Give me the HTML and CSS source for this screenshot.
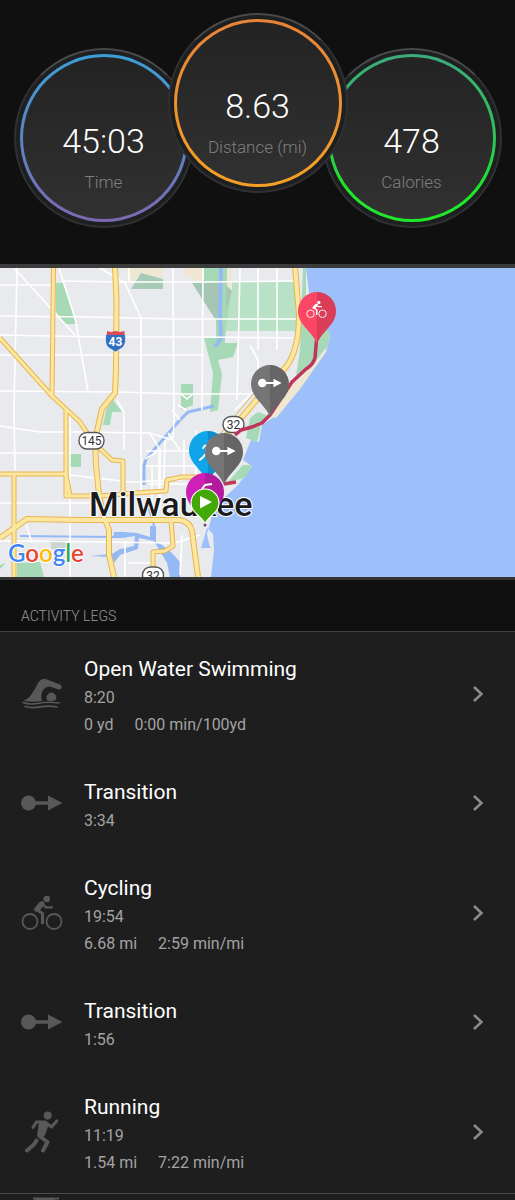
FILE: index.html
```html
<!DOCTYPE html>
<html lang="en">
<head>
<meta charset="utf-8">
<meta name="viewport" content="width=device-width, initial-scale=1">
<title>Activity</title>
<link rel="stylesheet" href="styles.css">
</head>
<body>
<svg class="defs" aria-hidden="true">
  <defs>
    <symbol id="swim" viewBox="0 0 42 42">
      <path fill="currentColor" d="M2 28C8 26 11 21 15 14C18 7 21 5 26 6.500L39 11.500C42 13 41 17 37.500 16.500L29 13.500C22 14 19 20 21 28Q11 29.500 2 28Z"/>
      <path fill="currentColor" d="M26.500 27.500A4.800 4.800 0 1 1 34.500 27Q30 28.500 26.500 27.500Z"/>
      <path fill="none" stroke="currentColor" stroke-width="1.600" stroke-linecap="round" d="M2 29.500Q9 32 18 30.200T38 30M4 33.500Q10 35.500 19 33.900T36 34"/>
    </symbol>
    <symbol id="move" viewBox="0 0 42 42">
      <circle cx="7.500" cy="21" r="7.500" fill="currentColor"/>
      <path fill="currentColor" d="M12 19.300H27V13.500L41.500 21L27 28.500V22.700H12Z"/>
    </symbol>
    <symbol id="bike" viewBox="0 0 42 42">
      <g fill="none" stroke="currentColor">
        <circle cx="9" cy="29.500" r="7.500" stroke-width="1.800"/>
        <circle cx="33" cy="29.500" r="7.500" stroke-width="1.800"/>
        <path stroke-width="2.200" stroke-linecap="round" stroke-linejoin="round" d="M21.500 10.500L24.500 15.300H31"/>
        <path stroke-width="3" stroke-linejoin="round" d="M15.500 17.500L21.500 21.500V32"/>
      </g>
      <path fill="currentColor" d="M12.500 17.500L18 10.500Q20.500 8 23 10.500L23.500 13L19 18L15 20Z"/>
      <circle cx="25.700" cy="7" r="3.300" fill="currentColor"/>
    </symbol>
    <symbol id="run" viewBox="0 0 42 42">
      <circle cx="26.700" cy="4.500" r="4" fill="currentColor"/>
      <g fill="none" stroke="currentColor" stroke-linecap="round" stroke-linejoin="round">
        <path stroke-width="3.200" d="M12 16.500L15.500 11H24L30.500 16L35.800 10"/>
        <path stroke-width="4" d="M19 25.500L26.500 31L22 39.500M15.500 29.500L13 33.500L6 39.500"/>
      </g>
      <path fill="currentColor" d="M18 10H25L28 13L24.500 23L22 27L16 25.500Z"/>
    </symbol>
    <symbol id="chevron" viewBox="0 0 12 18">
      <path fill="none" stroke="currentColor" stroke-width="2.500" d="M2 2L9.500 9L2 16"/>
    </symbol>
    <symbol id="pin" viewBox="-20 -20 40 54">
      <path fill="currentColor" d="M0 33C-4 21-19 14-19 0A19 19 0 0 1 19 0C19 14 4 21 0 33Z"/>
      <path fill="#000" opacity=".13" d="M0 33V-19A19 19 0 0 1 19 0C19 14 4 21 0 33Z"/>
    </symbol>
  </defs>
</svg>

<main>
  <section class="stats" aria-label="Summary">
    <div class="dial time"><div class="ring"><div class="face"><span class="value">45:03</span><span class="label">Time</span></div></div></div>
    <div class="dial distance"><div class="ring"><div class="face"><span class="value">8.63</span><span class="label">Distance (mi)</span></div></div></div>
    <div class="dial calories"><div class="ring"><div class="face"><span class="value">478</span><span class="label">Calories</span></div></div></div>
  </section>

  <section class="map" aria-label="Route map">
    <svg viewBox="0 268 515 309" role="img" aria-label="Map of Milwaukee with the route">
      <rect y="268" width="515" height="309" fill="#e8eaed"/>
      <path fill="#f0e7d2" d="M126 268H163V278L140 273L131 285Z M184 268H205V282L184 276Z M227 268H232L231 290L226 286Z"/>
      <g fill="#a6d9b6">
        <path d="M56 283H63L76 324H65L56 312Z"/>
        <path fill="#a8cbb7" d="M131 289L141 273L163 279V289Z"/>
        <path d="M204 268H227V286L232 291L225 338L225 343H238L233 357L218 360L222 374L218 410L210 412L213 373L204 338H216V320L204 296Z"/>
        <path fill="#a5c6b4" d="M192 283H220L217 322Z M226 286L232 291L226 310Z"/>
        <path fill="#b8e1c6" d="M232 281H295L299 331H225L232 292Z"/>
        <path d="M181 384H193V405L181 410Z M69 454H81V467H69Z M113 400L122 412H112L110 425H103L106 410Z M17 563L40 562L44 577H17Z M0 565L6 563L0 569Z"/>
      </g>
      <path fill="#cbd5d0" d="M51 540H68V549H51Z"/>
      <path fill="#9dc0fa" d="M306 268H515V577H211L214 550L213 534L207 528L201 548H211L205 540L212 516L224 498L238 485L252 466L243 460L251 440L259 442L262 425L280 413L300 388L323 355L330 336L312 318Z"/>
      <path fill="#a6d9b6" d="M303 268H306V320L330 332L328 345L312 366L296 376L300 350Z M250 418L261 416L260 430L257 442L246 438Z M243 465L252 465L245 478L228 482Z M250 418L258 412L268 416L262 422Z"/>
      <path fill="#f0e7d2" d="M327 347L330 338L326 352L300 389L276 418L271 417L293 382L312 368Z"/>
      <path fill="#9dc0fa" d="M206 530L210 548H202L206 535Z"/>
      <g fill="none" stroke="#95b9f4" stroke-width="4">
        <path d="M221 268L220 317L221 338L215 347"/>
        <path d="M214 406L188 412L179 421L146 459L144 466V485" stroke-width="3"/>
        <path d="M146 500L154 526V536M115 537L20 536" stroke-width="2"/>
      </g>
      <path fill="#95b9f4" d="M114 532L124 532L137 533L150 537L150 526H156V542L162 545L172 553L180 562V577H170L167 563L154 541L139 538L138 549L120 555L114 563L112 557L90 556L112 554L120 549L134 546L135 536L122 538H113Z"/>

      <g fill="none" stroke="#fff" stroke-width="1.600">
        <path d="M0 285H55M62 281L125 282L205 282L295 281M0 316L90 317L175 319H204M0 335L105 337L204 337L293 338M0 355H204M0 391L118 392L184 394H250M0 426L40 432L80 432L150 433L172 440M0 453H70M70 475L130 482L182 480M0 503H90M0 541H24L175 543L200 535M204 319H297"/>
        <path d="M17 268L14 410L15 470M70 410V577M141 319V490M173 268L174 420L173 440M203 268L202 410M240 268L237 400M258 268L258 350M277 268V350M129 268V282"/>
        <path d="M15 269L75 335M59 268L75 318L88 391M100 268L125 283L141 318V400M117 400L124 412V450M26 524L32 543M125 541V577M150 433L160 450V510M165 440L164 480M168 433L173 440L180 450M146 451H205M146 466H205M149 484H205M152 466V520M159 449V500M178 405L186 410M181 394L187 399L193 394M128 563H151M172 410L180 420M196 430V490M184 440V480M250 345L258 360V380M182 535L180 575M235 410L255 390M145 459L155 453L160 448"/>
      </g>

      <g class="roads-edge">
        <path d="M53.500 266L52 396M0 338L52 396L80 422L93 442L112 460L123 461V494M66 410V496L100 496L135 493L166 491L167 480L182 477H210M0 474H66L70 496M14 474V577M171 520L173 546L165 551L153 552V577"/>
        <path d="M115 266L116.500 300L116 370L115 393L102 409L95 440L96 465L99 495L104 517L109 530V555L114 577M0 538L27 519L80 520L180 520Q190 522 192 531L198 577M295 266L299 315Q299 350 286 367L260 396L218 445" class="wide"/>
      </g>
      <g class="roads-fill">
        <path d="M53.500 266L52 396M0 338L52 396L80 422L93 442L112 460L123 461V494M66 410V496L100 496L135 493L166 491L167 480L182 477H210M0 474H66L70 496M14 474V577M171 520L173 546L165 551L153 552V577"/>
        <path d="M115 266L116.500 300L116 370L115 393L102 409L95 440L96 465L99 495L104 517L109 530V555L114 577M0 538L27 519L80 520L180 520Q190 522 192 531L198 577M295 266L299 315Q299 350 286 367L260 396L218 445" class="wide"/>
      </g>
      <path fill="none" stroke="#e8b450" d="M254 393L221 433"/>

      <path fill="#2f6fc4" stroke="#fff" stroke-width=".6" d="M106 334Q104 345 109 348L115.500 352L122 348Q127 344 125 334Z"/>
      <path fill="#d84a55" d="M107 335V331L111 332L115.500 331L120 332L124.500 331V335Z"/>
      <text class="shield-text" x="115.500" y="346" fill="#fff">43</text>

      <g fill="#fff" stroke="#555" stroke-width="1.400">
        <rect x="79" y="432.500" width="25" height="16.500" rx="8"/>
        <rect x="223" y="416.500" width="21" height="16" rx="8"/>
        <rect x="142.500" y="567" width="21" height="16" rx="8"/>
      </g>
      <g class="route-text">
        <text x="91.500" y="445">145</text>
        <text x="233.500" y="429">32</text>
        <text x="153" y="580">32</text>
      </g>

      <text class="city" x="89" y="516">Milwaukee</text>

      <g fill="none" stroke="#bf365b" stroke-width="3.500" stroke-linejoin="round">
        <path d="M316.500 340L315 358Q313 365 306 369L292 382L270 415L262 423L252 427L241 430L235 435"/>
        <path d="M224 484L236 482"/>
      </g>

      <use href="#pin" x="188" y="430" width="40" height="54" color="#10a5e8"/>
      <use href="#run" x="197" y="440" width="21" height="21" color="#fff"/>
      <use href="#pin" x="204" y="432" width="40" height="54" color="#757575"/>
      <use href="#move" x="212" y="439" width="24" height="24" color="#fff"/>
      <use href="#pin" x="250" y="364" width="40" height="54" color="#757575"/>
      <use href="#move" x="258" y="371" width="24" height="24" color="#fff"/>
      <use href="#pin" x="297" y="291" width="40" height="54" color="#fb4765"/>
      <use href="#bike" x="306" y="299" width="21" height="21" color="#fff"/>
      <use href="#pin" x="185" y="472" width="40" height="54" color="#cd20b6"/>
      <path fill="none" stroke="#fff" stroke-width="2" d="M202 489L205 485L212 484"/>
      <path fill="#43a906" stroke="#fff" stroke-width="1.200" d="M205 524C202 516 191 513 191 503A14 14 0 0 1 219 503C219 513 208 516 205 524Z"/>
      <path fill="#fff" d="M200 496L212 502L200 508.500Z"/>
      <circle cx="205" cy="525" r="1.500" fill="#704080"/>

      <text class="google" x="8" y="562"><tspan fill="#4285f4">G</tspan><tspan fill="#ea4335">o</tspan><tspan fill="#fbbc05">o</tspan><tspan fill="#4285f4">g</tspan><tspan fill="#34a853">l</tspan><tspan fill="#ea4335">e</tspan></text>
    </svg>
  </section>

  <section class="legs">
    <h2>ACTIVITY LEGS</h2>
    <ul>
      <li><a href="#swimming">
        <svg class="icon"><use href="#swim"/></svg>
        <div class="info"><h3>Open Water Swimming</h3><p>8:20</p><p class="pair"><span>0 yd</span><span>0:00 min/100yd</span></p></div>
        <svg class="chevron"><use href="#chevron"/></svg>
      </a></li>
      <li><a href="#transition-1">
        <svg class="icon"><use href="#move"/></svg>
        <div class="info"><h3>Transition</h3><p>3:34</p></div>
        <svg class="chevron"><use href="#chevron"/></svg>
      </a></li>
      <li><a href="#cycling">
        <svg class="icon"><use href="#bike"/></svg>
        <div class="info"><h3>Cycling</h3><p>19:54</p><p class="pair"><span>6.68 mi</span><span>2:59 min/mi</span></p></div>
        <svg class="chevron"><use href="#chevron"/></svg>
      </a></li>
      <li><a href="#transition-2">
        <svg class="icon"><use href="#move"/></svg>
        <div class="info"><h3>Transition</h3><p>1:56</p></div>
        <svg class="chevron"><use href="#chevron"/></svg>
      </a></li>
      <li><a href="#running">
        <svg class="icon"><use href="#run"/></svg>
        <div class="info"><h3>Running</h3><p>11:19</p><p class="pair"><span>1.54 mi</span><span>7:22 min/mi</span></p></div>
        <svg class="chevron"><use href="#chevron"/></svg>
      </a></li>
    </ul>
    <div class="next"><svg viewBox="0 0 26 3"><path fill="currentColor" d="M0 0H26V2H22V3H2V2H0Z"/></svg></div>
  </section>
</main>
</body>
</html>
```

FILE: styles.css
```css
* {
  box-sizing: border-box;
}

body {
  margin: 0;
  background: #101010;
  color: #fff;
  font-family: Roboto, "Liberation Sans", sans-serif;
}

h2, h3, p, ul {
  margin: 0;
  padding: 0;
  font-weight: 400;
}

.defs {
  display: block;
  width: 0;
  height: 0;
}

.stats {
  display: flex;
  justify-content: center;
  align-items: flex-start;
  padding: 48px 0 36px;
}

.dial {
  width: 180px;
  height: 180px;
  padding: 4px;
  border: 2px solid #303032;
  border-top-color: #49494b;
  border-radius: 50%;
  background: #1d1f20;
}

.distance {
  z-index: 1;
  margin: -35px -26px 0;
}

.ring {
  height: 100%;
  padding: 3px;
  border-radius: 50%;
}

.time .ring {
  background: linear-gradient(#3a9fd5, #7d68b0);
}

.distance .ring {
  background: linear-gradient(#e8833a, #f5a024);
}

.calories .ring {
  background: linear-gradient(#3dab7c, #2fc258 50%, #1fe828 80%);
}

.face {
  display: flex;
  flex-direction: column;
  align-items: center;
  gap: 9px;
  height: 100%;
  padding-top: 62px;
  border-radius: 50%;
  background: linear-gradient(#232323, #303130);
}

.value {
  font-size: 34px;
  font-weight: 300;
  line-height: 44px;
}

.label {
  font-size: 17px;
  font-weight: 300;
  line-height: 20px;
  color: #808080;
}

.map {
  border-top: 4px solid #3b3b3c;
  border-bottom: 3px solid #343435;
}

.map svg {
  display: block;
  width: 100%;
}

.roads-edge, .roads-fill {
  fill: none;
  stroke-linejoin: round;
}

.roads-edge {
  stroke: #e8b450;
  stroke-width: 5px;
}

.roads-edge .wide {
  stroke-width: 6px;
}

.roads-fill {
  stroke: #fce7a0;
  stroke-width: 3px;
}

.roads-fill .wide {
  stroke-width: 4px;
}

.shield-text, .route-text {
  font-size: 12px;
  text-anchor: middle;
}

.shield-text {
  font-weight: 700;
}

.route-text {
  fill: #333;
}

.city {
  font-size: 34px;
  font-weight: 500;
  fill: #1b1b1d;
  stroke: #fff;
  stroke-width: 2px;
  stroke-linejoin: round;
  paint-order: stroke;
}

.google {
  font-family: Lato, sans-serif;
  font-size: 24px;
  font-weight: 600;
  stroke: #fff;
  stroke-width: 2px;
  paint-order: stroke;
}

.legs {
  background: #1e1e1e;
}

.legs h2 {
  padding: 26px 21px 5px;
  border-bottom: 1px solid #404040;
  background: #101010;
  font-size: 14px;
  font-weight: 300;
  line-height: 20px;
  color: #999;
}

.legs ul {
  list-style: none;
}

.legs a {
  display: flex;
  align-items: center;
  padding: 0 31px 0 21px;
  color: inherit;
  text-decoration: none;
}

.icon {
  width: 42px;
  height: 42px;
  color: #585858;
}

.info {
  flex: 1;
  padding: 22px 0 17px 21px;
}

.info h3 {
  font-size: 21px;
  line-height: 31px;
}

.info p {
  font-size: 16px;
  line-height: 26px;
  color: #a3a3a3;
}

.info .pair {
  display: flex;
  gap: 21px;
  line-height: 27px;
}

.chevron {
  width: 12px;
  height: 18px;
  color: #8c8c8c;
}

.next {
  padding: 3px 33px 0;
  border-top: 1px solid #4a4a4a;
  color: #585858;
}

.next svg {
  display: block;
  width: 26px;
  height: 4px;
}
```
